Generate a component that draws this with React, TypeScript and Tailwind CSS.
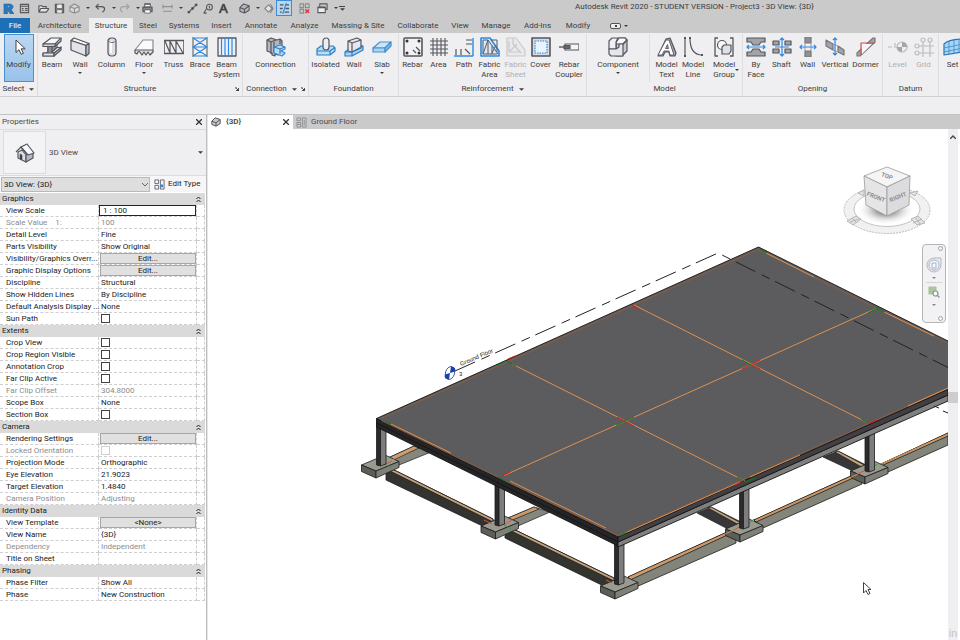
import { useState } from "react";
import type { ReactNode } from "react";
import clsx from "clsx";

const DARK = "#55565c";
const BLUE = "#2f8ae0";

const Icon: React.FC<{ children: ReactNode; className?: string; box?: number }> = ({ children, className = "size-5", box = 20 }) => (
  <svg viewBox={`0 0 ${box} ${box}`} className={clsx("shrink-0", className)} fill="none" stroke={DARK} strokeWidth="1.2" strokeLinejoin="round" aria-hidden="true">
    {children}
  </svg>
);

const Caret: React.FC<{ className?: string }> = ({ className = "w-[5px] h-[3px]" }) => (
  <svg viewBox="0 0 6 3" className={clsx("shrink-0", className)} aria-hidden="true">
    <path d="M0 0h6L3 3z" fill="#3c3c3c" />
  </svg>
);

const icons: Record<string, ReactNode> = {
  modify: <path d="M7 3v12.500l3-2.800 2.200 4.600 2.200-1-2.200-4.500h4z" fill="#fff" stroke="#444" strokeWidth="1" />,
  beam: (
    <>
      <path d="M5 9.500 12 9l4-4v8l-5 3H5z" fill="#8e9097" stroke="none" />
      <path d="M1 7 9 1h10l-6 6z" fill="#f4f5f9" />
      <path d="M1 7h12v2.500H1z" fill="#d4d6de" />
      <path d="m13 9.500 6-5.500V1" fill="#b5b7c0" />
      <path d="M1 16h3l2-1V9.500M10 9.500V15l2 1v3H1v-3" />
      <path d="M1 16h11v3H1z" fill="#dfe1e8" />
      <path d="m12 16 7-6v3l-7 6z" fill="#b5b7c0" />
      <path d="m10 15 5-4.500h4L12 16z" fill="#f4f5f9" />
    </>
  ),
  wall: (
    <>
      <path d="M1 3.500 4 1l15 5.500-3 2z" fill="#fafafa" />
      <path d="M1 3.500 16 8.500V19L1 13z" fill="#e3e4ea" />
      <path d="m16 8.500 3-2v10L16 19z" fill="#b9bbc4" />
    </>
  ),
  column: (
    <>
      <rect x="6" y="1" width="8" height="18" rx="3.500" fill="#dcdee6" />
      <path d="M9 4v12" stroke="#fff" strokeWidth="2" />
      <path d="M6.500 4c1.500 2 5.500 2 7 0" strokeWidth=".8" />
    </>
  ),
  floor: (
    <>
      <path d="M1 13 9 3h10v10" fill="#fafafa" stroke="#8b8c92" />
      <path d="M1 13v3l2 1 1-2 1.500-.5L8 18l2-3 2 3 2-3 2 3 3-3v-2z" fill="#dfe0e6" />
    </>
  ),
  truss: (
    <>
      <path d="M0 3.500h20v13H0z" strokeWidth="1.500" />
      <path d="m1 4 5 12V4l6 12V4l7 12" strokeWidth="1.200" />
    </>
  ),
  brace: (
    <>
      <path d="M3 0v20M17 0v20" stroke="#888" strokeWidth="1.500" />
      <path d="M3 1h14M3 10h14M3 19h14M3 1l14 9L3 19M17 1 3 10l14 9" stroke={BLUE} strokeWidth="1.200" />
    </>
  ),
  beamSystem: (
    <>
      <path d="M1 1h18v18H1z" fill="#eef1f7" strokeWidth="1.300" />
      <path d="M4.500 1v18M8 1v18M11.500 1v18M15 1v18" stroke={BLUE} />
    </>
  ),
  connection: (
    <>
      <path d="M1 3 5 1l6 2 3-1 2 2v12l-4 2-3-1v2l-3-1v-2l-5-2z" fill="#b4b6be" />
      <path d="m1 3 4 2v12M5 5l5-2M8 5v11M14 2v5" />
      <path d="m8 10 6-2 5 2v2l-4 2 4 2-3 3-8-3z" fill="#b9dcf8" stroke={BLUE} />
      <path d="m8 10 6 2 5-2M14 12v5" stroke="#3a78b0" />
    </>
  ),
  isolated: (
    <>
      <path d="m1 12 4-3h12l2 2v3l-5 4H1z" fill="#b7dcf6" stroke="#2c7fc4" />
      <path d="M1 14h13l5-3.500M14 14v4" stroke="#2c7fc4" />
      <rect x="7" y="1" width="6" height="12" rx="3" fill="#eceef3" />
    </>
  ),
  wallFoundation: (
    <>
      <path d="m1 15 4-3 9-4 5 1v4L8 19H1z" fill="#a6d3f5" stroke="#2c7fc4" />
      <path d="M4 4 13 1l4 2v8l-9 4-4-1z" fill="#e6e8ee" />
      <path d="m8 6 9-3M8 6v9M4 4l4 2" />
      <path d="M1 15h7l11-6M8 15v4" stroke="#2c7fc4" />
    </>
  ),
  slab: (
    <>
      <path d="M1 11 8 5h11l-6 6z" fill="#cbe6fa" stroke="#4a8fc9" />
      <path d="M1 11h12v4H1z" fill="#a9d5f5" stroke="#4a8fc9" />
      <path d="m13 11 6-6v4l-6 6z" fill="#7fbbe8" stroke="#4a8fc9" />
    </>
  ),
  rebar: (
    <>
      <rect x="1" y="1" width="18" height="18" rx="1" fill="#f2f2f5" strokeWidth="1.600" />
      <g fill="#333" stroke="none">
        <circle cx="4" cy="4" r="1.500" /><circle cx="16" cy="4" r="1.500" /><circle cx="4" cy="16" r="1.500" /><circle cx="16" cy="16" r="1.500" />
      </g>
      <path d="m10 13 3 3M13 10l4 4" />
    </>
  ),
  area: <path d="M4 1v18M8 1v18M12 1v18M16 1v18M1 4h18M1 8h18M1 12h18M1 16h18" strokeWidth="1.100" />,
  path: (
    <>
      <path d="M0 19h19M19 1v18" stroke={BLUE} strokeWidth="1.400" />
      <path d="M2 12v6M7 12v6M11 12l5 5M12 3h6M12 7h6" />
    </>
  ),
  fabricArea: (
    <>
      <path d="M1 1h9l9 13v5H1z" fill="#dce7f5" stroke={BLUE} strokeWidth="1.600" />
      <path d="M3 17V3h5l10 14M3 17 8 3v14M12 9v8M17 3v12M11 3h6M3 17h14M12 16l4-8" stroke="#555a66" strokeWidth="1" />
    </>
  ),
  fabricSheet: (
    <g stroke="#c9c9cc">
      <path d="M1 1h9l9 12v6H1z" fill="#e9e9eb" />
      <path d="m3 15 8-8M3 4v11h10M7 1v6l8 9" />
    </g>
  ),
  cover: (
    <>
      <path d="M1 1h18v18H1z" fill="#d8dbe5" strokeWidth="1.600" />
      <path d="M4 4h12v12H4z" fill="#eaf4fd" stroke={BLUE} strokeDasharray="1.500 1" />
    </>
  ),
  coupler: (
    <>
      <path d="M6 7h14v6H6z" fill="#f5f5f7" />
      <path d="M5 8.500h6v3H5z" fill="#8a8b90" />
      <path d="M0 10h11" strokeWidth="1.400" />
    </>
  ),
  component: (
    <>
      <path d="M8 6V3l3-2h6l2 2v11l-5 5H8z" fill="#c9cbd4" />
      <path d="M8 5.500 11 1h6l2 2-4 4H8z" fill="#fafafb" />
      <path d="M1 12V4l3-3h6L8 5v7z" fill="#eff0f4" />
      <path d="M1 12h7l3-2V7h4v12H3l-2-2z" fill="#e6e7ed" />
      <path d="m15 7 4-4" />
    </>
  ),
  modelText: (
    <>
      <path d="m1 19 8-17 4-1 6 15-1 3h-5l-1-4H8l-2 4z" fill="#a5a8b3" />
      <path fillRule="evenodd" d="M1 18 9 3h3l5 15h-4l-1-4H7l-2 4zM8.500 11.500h3l-1-4z" fill="#fff" strokeWidth=".9" />
    </>
  ),
  modelLine: (
    <>
      <path d="M2 1v18" />
      <path d="M7 1c0 11 4 17 12 17" strokeWidth="1.200" />
      <path d="M1 1h2M1 19h2M6 1h2M18 18h2" strokeWidth="2" />
    </>
  ),
  modelGroup: (
    <>
      <path d="M4 1H1v18h3M16 1h3v18h-3" strokeWidth="1.300" />
      <circle cx="8" cy="8" r="4.500" fill="#fafafa" />
      <path d="m8 10 2-2h7v6l-2 3H8z" fill="#dfe1e8" />
    </>
  ),
  byFace: (
    <>
      <path d="M1 1h18v4h-4l-2 3H7L5 5H1zM1 19h18v-4h-4l-2-3H7l-2 3H1z" fill="#a3a4aa" />
      <path d="M1 10h18M3 8l-2 2 2 2M17 8l2 2-2 2" stroke={BLUE} />
    </>
  ),
  shaft: (
    <>
      <path d="M1 4h6v4H1zM13 4h6v4h-6zM1 12h6v4H1zM13 12h6v4h-6z" fill="#a3a4aa" />
      <path d="M10 1v18M8 3l2-2 2 2M8 17l2 2 2-2M3 10h14" stroke={BLUE} />
    </>
  ),
  wallOpening: (
    <>
      <path d="M7 0h6v6H7zM7 14h6v6H7z" fill="#8f9097" stroke="#777" />
      <path d="M7 6v8M13 6v8" stroke="#aaa" />
      <path d="M2 10h16M4 8l-2 2 2 2M16 8l2 2-2 2" stroke={BLUE} />
    </>
  ),
  vertical: (
    <>
      <path d="m1 3 7 4v6L1 9zM13 9l6 4v5l-6-3z" fill="#a3a4aa" stroke="#777" />
      <path d="m8 7 5 2M8 13l5 2" stroke="#aaa" />
      <path d="M10 1v17M8 3l2-2 2 2M8 16l2 2 2-2" stroke={BLUE} />
    </>
  ),
  dormer: (
    <>
      <path d="M1 16 17 1h2v4L4 19H1z" fill="#a3a4aa" stroke="#77787d" />
      <path d="M5 7h11L6 17z" fill="#f6f6f8" stroke="none" />
      <path d="M5 18V6h14" stroke="#c85050" strokeWidth="1.200" />
    </>
  ),
  level: (
    <g stroke="#bcbcc0">
      <path d="M0 10h4M7 6v5M20 10H8" />
      <circle cx="14" cy="10" r="5" fill="#eee" />
      <path d="M14 10V5a5 5 0 0 1 5 5zM14 10v5a5 5 0 0 1-5-5z" fill="#a5a5a9" stroke="none" />
    </g>
  ),
  grid: (
    <g stroke="#bcbcc0">
      <path d="M9 5v15M16 5v15M5 9h15M5 16h15" strokeWidth="1.200" />
      <circle cx="9" cy="3" r="2" /><circle cx="16" cy="3" r="2" /><circle cx="3" cy="9" r="2" /><circle cx="3" cy="16" r="2" />
    </g>
  ),
  set: (
    <>
      <path d="M1 7c3-3 9-5 19-5v13L1 18z" fill="#a6d6f7" stroke="#2875b5" />
      <path d="M1 11l19-4M1 15l19-4M6 4v13M11 3v13M16 2v13" stroke="#4a90c8" strokeWidth=".9" />
    </>
  ),
};

type Tool = { name: string; icon: string; width: string; menu?: boolean; disabled?: boolean; active?: boolean; divider?: boolean };

const ToolButton: React.FC<{ tool: Tool }> = ({ tool }) => (
  <button
    disabled={tool.disabled}
    className={clsx(
      "relative flex h-[48px] shrink-0 flex-col items-center border pt-[2px]",
      tool.width,
      tool.active ? "border-[#4a90cf] bg-linear-to-b from-[#bcd7f0] to-[#98c2ea]" : "border-transparent"
    )}
  >
    <Icon>{icons[tool.icon]}</Icon>
    <span className={clsx("mt-[3px] text-center text-[8px] leading-[10px] whitespace-pre", tool.disabled ? "text-[#b0b0b3]" : "text-[#3d3d40]")}>
      {tool.name}
    </span>
    {tool.menu ? <Caret className={tool.name.includes("\n") ? "absolute right-[2px] bottom-[10px] h-[2px] w-[4px]" : "mt-[2px] h-[2px] w-[4px]"} /> : null}
  </button>
);

const RibbonPanel: React.FC<{ title: string; width: string; tools: Tool[]; menu?: boolean; launcher?: boolean; center?: boolean }> = ({
  title, width, tools, menu, launcher, center,
}) => (
  <section className={clsx("flex shrink-0 flex-col border-r border-[#dddde0]", width)}>
    <div className={clsx("flex", center && "justify-center")}>
      {tools.map((tool) => (
        <div key={tool.name} className="flex">
          <ToolButton tool={tool} />
          {tool.divider ? <span className="mr-[3px] w-px bg-[#dddde0]" /> : null}
        </div>
      ))}
    </div>
    <div className={clsx("relative flex h-[14px] items-center justify-center gap-[5px] text-[8px] text-[#3d3d40]", menu && launcher && "pr-[8px]")}>
      <span>{title}</span>
      {menu ? <Caret /> : null}
      {launcher ? (
        <svg viewBox="0 0 4 4" className="absolute right-[3px] size-1" aria-hidden="true">
          <path d="M0 0h2M0 0v2M1 1l2 2M4 1v3H1z" stroke="#444" strokeWidth=".8" fill="#444" />
        </svg>
      ) : null}
    </div>
  </section>
);

const panels = [
  {
    title: "Select", width: "w-[38px]", menu: true, center: true,
    tools: [{ name: "Modify", icon: "modify", width: "w-[30px]", active: true }],
  },
  {
    title: "Structure", width: "w-[205px]", launcher: true,
    tools: [
      { name: "Beam", icon: "beam", width: "w-[28px]" },
      { name: "Wall", icon: "wall", width: "w-[28px]", menu: true },
      { name: "Column", icon: "column", width: "w-[35px]" },
      { name: "Floor", icon: "floor", width: "w-[30px]", menu: true },
      { name: "Truss", icon: "truss", width: "w-[29px]" },
      { name: "Brace", icon: "brace", width: "w-[24px]" },
      { name: "Beam\nSystem", icon: "beamSystem", width: "w-[29px]" },
    ],
  },
  {
    title: "Connection", width: "w-[66px]", menu: true, launcher: true, center: true,
    tools: [{ name: "Connection", icon: "connection", width: "w-[46px]" }],
  },
  {
    title: "Foundation", width: "w-[90px]", center: true,
    tools: [
      { name: "Isolated", icon: "isolated", width: "w-[29px]" },
      { name: "Wall", icon: "wallFoundation", width: "w-[28px]" },
      { name: "Slab", icon: "slab", width: "w-[28px]", menu: true },
    ],
  },
  {
    title: "Reinforcement", width: "w-[188px]", menu: true, center: true,
    tools: [
      { name: "Rebar", icon: "rebar", width: "w-[26px]" },
      { name: "Area", icon: "area", width: "w-[26px]" },
      { name: "Path", icon: "path", width: "w-[25px]" },
      { name: "Fabric\nArea", icon: "fabricArea", width: "w-[26px]" },
      { name: "Fabric\nSheet", icon: "fabricSheet", width: "w-[26px]", disabled: true },
      { name: "Cover", icon: "cover", width: "w-[24px]" },
      { name: "Rebar\nCoupler", icon: "coupler", width: "w-[33px]" },
    ],
  },
  {
    title: "Model", width: "w-[156px]",
    tools: [
      { name: "Component", icon: "component", width: "w-[62px]", menu: true, divider: true },
      { name: "Model\nText", icon: "modelText", width: "w-[27px]" },
      { name: "Model\nLine", icon: "modelLine", width: "w-[26px]" },
      { name: "Model\nGroup", icon: "modelGroup", width: "w-[36px]", menu: true },
    ],
  },
  {
    title: "Opening", width: "w-[140px]", center: true,
    tools: [
      { name: "By\nFace", icon: "byFace", width: "w-[24px]" },
      { name: "Shaft", icon: "shaft", width: "w-[27px]" },
      { name: "Wall", icon: "wallOpening", width: "w-[25px]" },
      { name: "Vertical", icon: "vertical", width: "w-[30px]" },
      { name: "Dormer", icon: "dormer", width: "w-[31px]" },
    ],
  },
  {
    title: "Datum", width: "w-[56px]", center: true,
    tools: [
      { name: "Level", icon: "level", width: "w-[26px]", disabled: true },
      { name: "Grid", icon: "grid", width: "w-[26px]", disabled: true },
    ],
  },
  { title: "", width: "w-[90px]", tools: [{ name: "Set", icon: "set", width: "w-[27px]" }] },
];

const tabs = [
  ["Architecture", "w-[59px]"],
  ["Structure", "w-[44px]"],
  ["Steel", "w-[30px]"],
  ["Systems", "w-[42px]"],
  ["Insert", "w-[33px]"],
  ["Annotate", "w-[46px]"],
  ["Analyze", "w-[41px]"],
  ["Massing & Site", "w-[66px]"],
  ["Collaborate", "w-[54px]"],
  ["View", "w-[30px]"],
  ["Manage", "w-[42px]"],
  ["Add-Ins", "w-[41px]"],
  ["Modify", "w-[40px]"],
];

const quickTools: { name: string; width: string; menu?: boolean; active?: boolean; separated?: boolean; art: ReactNode }[] = [
  { name: "Revit", width: "w-[16px]", art: <path fillRule="evenodd" d="M1 12V1h6c5 0 5 5 2 6l3 5H8L5 8v4zM5 3v2h2V3z" fill="#2a79bf" stroke="#1b5c9b" strokeWidth=".5" /> },
  { name: "Home", width: "w-[16px]", art: <path d="M1.500 1.500h9v9h-9zM1.500 3.500h9M3 6h2M3 8h2M6.500 6h3M6.500 8h3" /> },
  { name: "Open", width: "w-[22px]", art: <path d="M1 10V3h3l1 1h4v2M1 10l2-4h9l-3 4z" fill="#e4e4e6" /> },
  { name: "Save", width: "w-[11px]", art: <><path d="M1.500 1.500h9v9h-9z" fill="#777" /><path d="M3.500 1.500h5v4h-5zM3.500 8h5v2.500h-5z" fill="#eee" stroke="none" /></> },
  { name: "Synchronize", width: "w-[28px]", menu: true, art: <g stroke="#8c8c8f"><path d="m1 4 5-3 5 3v5l-5 2-5-2z" fill="#d7d7d9" /><path d="m1 4 5 2 5-2M6 6v5" /></g> },
  { name: "Undo", width: "w-[24px]", menu: true, art: <path d="M4 1 1 4l3 3M1 4h6c5 0 4 5 1 6" strokeWidth="1.300" /> },
  { name: "Redo", width: "w-[24px]", menu: true, art: <path d="m8 1 3 3-3 3M11 4H5C0 4 1 9 4 10" stroke="#a0a0a2" strokeWidth="1.300" /> },
  { name: "Print", width: "w-[12px]", art: <><path d="M3 5V1h6v4M1 4.500h10v5H1z" fill="#888" /><path d="M3 1.500h6V4H3zM3 7.500h6V11H3z" fill="#fff" strokeWidth=".8" /></> },
  { name: "Measure", width: "w-[24px]", menu: true, separated: true, art: <path d="M1 4h10M1 2v4M11 2v4M1 9h10" stroke="#8f8f92" strokeWidth="1.200" /> },
  { name: "Aligned dimension", width: "w-[16px]", art: <><path d="m2 10 8-8" /><path d="M1 9h2v2H1zM9 1h2v2H9zM5 5h2v2H5z" fill="#444" strokeWidth=".6" /></> },
  { name: "Tag", width: "w-[16px]", art: <><circle cx="7" cy="4.500" r="3.200" /><path d="M7 3v3M4 6l-3 5h3" /></> },
  { name: "Text", width: "w-[14px]", art: <path fillRule="evenodd" d="M1 11 5 1h2l4 10H9L8 8H4l-1 3zM5 6.500h2L6 3z" fill="#444" strokeWidth=".4" /> },
  { name: "Default 3D view", width: "w-[24px]", menu: true, separated: true, art: <><path d="m1 5 4-4 6 2v5l-5 3-5-2z" fill="#b9b9bd" /><path d="m1 5 5 2 5-4M6 7v4" /></> },
  { name: "Section", width: "w-[15px]", art: <path d="M6 2 2 6l4 4 4-4zM8 1l3 5-3 5" stroke="#87878a" fill="#e6e6e8" /> },
  { name: "Thin lines", width: "w-[16px]", active: true, art: <><path d="M1 2h4M1 6h3M1 10h2M7 2h4M7 6h4M6 10h5" strokeWidth="1.400" /><path d="M8 0 4 12" stroke={BLUE} /></> },
  { name: "Close hidden", width: "w-[24px]", art: <><path d="M1 1h4v4H1zM7 1h4v4H7zM1 7h4v4H1z" stroke="#8b8b8e" /><path d="m7 7 4 4M11 7l-4 4" stroke="#d33" strokeWidth="1.600" /></> },
  { name: "Switch windows", width: "w-[22px]", menu: true, art: <><path d="M3 4V1h8v6H9" /><path d="M1 4.500h8v6H1z" fill="#eee" /><path d="M1 5h8" strokeWidth="1.500" /></> },
];

type Row = { label: string; value?: string; kind?: "edit" | "check" | "input"; dim?: boolean };

const groups: { title: string; rows: Row[] }[] = [
  {
    title: "Graphics",
    rows: [
      { label: "View Scale", value: "1 : 100", kind: "input" },
      { label: "Scale Value    1:", value: "100", dim: true },
      { label: "Detail Level", value: "Fine" },
      { label: "Parts Visibility", value: "Show Original" },
      { label: "Visibility/Graphics Overr...", value: "Edit...", kind: "edit" },
      { label: "Graphic Display Options", value: "Edit...", kind: "edit" },
      { label: "Discipline", value: "Structural" },
      { label: "Show Hidden Lines", value: "By Discipline" },
      { label: "Default Analysis Display ...", value: "None" },
      { label: "Sun Path", kind: "check" },
    ],
  },
  {
    title: "Extents",
    rows: [
      { label: "Crop View", kind: "check" },
      { label: "Crop Region Visible", kind: "check" },
      { label: "Annotation Crop", kind: "check" },
      { label: "Far Clip Active", kind: "check" },
      { label: "Far Clip Offset", value: "304.8000", dim: true },
      { label: "Scope Box", value: "None" },
      { label: "Section Box", kind: "check" },
    ],
  },
  {
    title: "Camera",
    rows: [
      { label: "Rendering Settings", value: "Edit...", kind: "edit" },
      { label: "Locked Orientation", kind: "check", dim: true },
      { label: "Projection Mode", value: "Orthographic" },
      { label: "Eye Elevation", value: "21.9023" },
      { label: "Target Elevation", value: "1.4840" },
      { label: "Camera Position", value: "Adjusting", dim: true },
    ],
  },
  {
    title: "Identity Data",
    rows: [
      { label: "View Template", value: "<None>", kind: "edit" },
      { label: "View Name", value: "{3D}" },
      { label: "Dependency", value: "Independent", dim: true },
      { label: "Title on Sheet", value: "" },
    ],
  },
  {
    title: "Phasing",
    rows: [
      { label: "Phase Filter", value: "Show All" },
      { label: "Phase", value: "New Construction" },
    ],
  },
];

const PropertyValue: React.FC<{ row: Row; id: string }> = ({ row, id }) => {
  const [checked, setChecked] = useState(false);
  const [text, setText] = useState(row.value ?? "");

  if (row.kind === "check") {
    return (
      <input
        id={id}
        type="checkbox"
        checked={checked}
        disabled={row.dim}
        onChange={(e) => setChecked(e.target.checked)}
        className={clsx("ml-[2px] size-[9px] appearance-none border bg-white checked:bg-[#333]", row.dim ? "border-[#cfcfcf]" : "border-[#444]")}
      />
    );
  }
  if (row.kind === "input") {
    return (
      <input
        id={id}
        value={text}
        onChange={(e) => setText(e.target.value)}
        className="h-[11px] w-full border border-[#222] bg-white px-[3px] text-[8px] leading-[9px] outline-none"
      />
    );
  }
  if (row.kind === "edit") {
    return (
      <button id={id} className="ml-px h-[11px] w-[96px] border border-[#a6a6a6] bg-[#e0e0e1] text-center text-[8px] leading-[9px]">
        {row.value}
      </button>
    );
  }
  return <output id={id} className="pl-[2px]">{row.value}</output>;
};

const PropertyGroup: React.FC<{ title: string; rows: Row[] }> = ({ title, rows }) => (
  <tbody>
    <tr className="h-3 bg-[#dadadb]">
      <th colSpan={3} scope="rowgroup" className="p-0 text-left font-normal">
        <button className="flex h-3 w-full items-center justify-between pr-[4px] pl-[2px] text-[8px] leading-3 text-[#222]">
          {title}
          <svg viewBox="0 0 5 6" className="h-[6px] w-[5px]" fill="none" stroke="#222" aria-hidden="true">
            <path d="m.5 3 2-2 2 2M.5 6l2-2 2 2" />
          </svg>
        </button>
      </th>
    </tr>
    {rows.map((row) => {
      const id = row.label.toLowerCase().replace(/[^a-z]+/g, "-");
      return (
        <tr key={row.label} className={clsx("h-3", row.dim ? "text-[#8c8c8e]" : "text-[#222]")}>
          <th scope="row" className="border-r border-b border-dashed border-[#cfcfd1] p-0 pl-[6px] text-left font-normal">
            <label htmlFor={id} className="block h-[11px] leading-[11px] whitespace-pre">{row.label}</label>
          </th>
          <td className="border-r border-b border-dashed border-[#cfcfd1] p-0">
            <div className="flex h-[11px] items-center leading-[11px]"><PropertyValue row={row} id={id} /></div>
          </td>
          <td className="border-r border-b border-dashed border-[#cfcfd1] p-0" />
        </tr>
      );
    })}
  </tbody>
);

const PropertiesPanel = () => (
  <aside className="flex w-[207px] shrink-0 flex-col border-r border-[#bdbdc0] bg-white text-[8px]">
    <div className="flex h-[14px] items-center justify-between bg-[#efeef0] pr-[4px] pl-[2px]">
      <h2 className="text-[#4a4a4d]">Properties</h2>
      <button aria-label="Close properties">
        <svg viewBox="0 0 6 6" className="size-[6px]" stroke="#333" strokeWidth="1.300"><path d="m0 0 6 6M6 0 0 6" /></svg>
      </button>
    </div>
    <button className="flex h-[47px] items-center border-y border-[#dcdcde] bg-[#efeef0] px-[3px] text-[#4a4a4d]">
      <span className="mr-[3px] flex h-[43px] w-[43px] items-center justify-center border border-[#dcdcde] bg-[#f3f2f4]">
        <Icon>
          <path d="M3 9v6l8 4V12L7 7z" fill="#dcdee5" />
          <path d="m11 12 3-6 4 4v5l-7 4z" fill="#b4b7c3" />
          <path d="m1 9 5-5 5 8 3 0-5-8z" fill="#eceef4" stroke="none" />
          <path d="m6 4 6-3 7 9-6 2z" fill="#f7f8fb" />
          <path d="m1 9 5-5 6 8" />
          <path d="M5 11v5l2 1v-5z" fill="#333" strokeWidth=".6" />
        </Icon>
      </span>
      3D View
      <Caret className="ml-auto h-[3px] w-[5px]" />
    </button>
    <div className="flex h-[16px] items-center gap-[4px] bg-[#f6f5f7] pl-px">
      <div className="relative w-[149px]">
        <select aria-label="View" className="block h-[15px] w-full appearance-none border border-[#b9b9bb] bg-[#dededf] pl-[2px] text-[8px] leading-[13px] text-[#222]">
          <option>{"3D View: {3D}"}</option>
        </select>
        <svg viewBox="0 0 6 4" className="pointer-events-none absolute top-[6px] right-[2px] h-1 w-[6px]" fill="none" stroke="#666"><path d="m0 0 3 3 3-3" /></svg>
      </div>
      <button className="flex items-center gap-[3px] text-[#222]">
        <Icon className="size-[11px]" box={12}>
          <path d="M1 1h4v4H1zM1 7h4v4H1zM7 1h4v10H7z" strokeWidth=".9" />
          <path d="M7 6h3v3H7z" fill={BLUE} stroke="none" />
        </Icon>
        Edit Type
      </button>
    </div>
    <table className="mt-px w-[205px] table-fixed border-separate border-spacing-0">
      <colgroup>
        <col className="w-[99px]" />
        <col className="w-[98px]" />
        <col />
      </colgroup>
      {groups.map((group) => <PropertyGroup key={group.title} {...group} />)}
    </table>
  </aside>
);

const Column: React.FC<{ x: number; top: number; bottom: number }> = ({ x, top, bottom }) => (
  <g stroke="#1c1c1c" strokeWidth=".8">
    <path d={`M${x} ${top}h4v${bottom - top}l-4-1z`} fill="#2b2b2d" />
    <path d={`M${x + 4} ${top}h5.500v${bottom - top - 2}l-5.500 2z`} fill="#7d7d7c" />
  </g>
);

// x, y is the front corner of the footing's top face
const Footing: React.FC<{ x: number; y: number }> = ({ x, y }) => (
  <g transform={`translate(${x} ${y})`} stroke="#1c1c1c" strokeWidth=".8">
    <path d="M-14.500-6 9-16 23-9.500 0 0z" fill="#9a9b90" />
    <path d="M-14.500-6 0 0v7L-14.500.5z" fill="#5d5e57" />
    <path d="M0 0 23-9.500v6L0 7z" fill="#7f8077" />
  </g>
);

const Model = () => (
  <svg viewBox="208 129 740 511" preserveAspectRatio="xMinYMin slice" className="absolute inset-0 size-full" aria-label="3D model">
    {/* ground beams behind the deck */}
    <g stroke="#1c1c1c" strokeWidth=".7">
      <path d="M388 458 414 446l17 6-32 13z" fill="#85867d" />
      <path d="M388 458 414 446l5 2-28 13z" fill="#c3a27c" />
      <path d="M508 518 534 507l16 5-32 14z" fill="#85867d" />
      <path d="M508 518 534 507l5 2-29 12z" fill="#c3a27c" />
      <path d="m697 513 14-6 30 15-13 7z" fill="#37373a" />
      <path d="m823 457 15-6 30 15-13 6z" fill="#37373a" />
      <path d="m708 508 3-1 30 16-2 2zM835 452l3-1 30 16-3 2z" fill="#c3a27c" />
    </g>
    {/* left run */}
    <g stroke="#1c1c1c" strokeWidth=".8">
      <path d="M386 466 493 519v12L386 480zM505 525l109 53v13L505 538z" fill="#33332f" />
      <path d="M386 466 493 519v3L386 469zM505 525l109 53v3L505 528z" fill="#c3a27c" />
    </g>
    {/* right run */}
    <g stroke="#1c1c1c" strokeWidth=".8">
      <path d="M628 577 736 528v15L636 587zM754 520l108-49v13l-99 44zM879 465l69-32v12l-60 27z" fill="#83847a" />
      <path d="M628 577 736 528v3L630 580zM754 520l108-49v3l-106 48zM879 465l69-32v3l-67 30z" fill="#c3a27c" />
    </g>
    <Footing x={376} y={471} />
    <Footing x={495.500} y={532} />
    <Footing x={615} y={592} />
    <Footing x={740} y={535} />
    <Footing x={865} y={477} />
    <g strokeWidth="1" fill="none">
      <path d="m384 465 8-4M492 524l-8-4M504 525l8-5M612 583l-6-3M732 531l9-5M857 474l9-4" stroke="#e0533c" />
      <path d="m386 465 6 3M504 525l7 4M748 524l6-5M873 467l6-4" stroke="#3f9a55" />
      <path d="m392 460 24-12M512 519l24-11M630 577l104-47M756 520l102-46M881 464l67-30" stroke="#dc8d50" />
    </g>
    <Column x={376.500} top={424} bottom={466} />
    <Column x={495} top={482} bottom={526} />
    <Column x={614.500} top={541} bottom={585} />
    <Column x={739.500} top={485} bottom={529} />
    <Column x={865} top={428} bottom={472} />
    {/* deck */}
    <g stroke="#151515" strokeWidth=".9" strokeLinejoin="round">
      <path d="M376.500 418.500 618 537v9l-241.500-119z" fill="#252528" />
      <path d="M618 542 948 395v6L618 547z" fill="#80807e" />
      <path d="M618 537 948 389v6L618 542z" fill="#413f44" />
      <path d="m376.500 423 241.500 119" />
      <path d="M376.500 418.500 758.500 247 950 342v46.500L618 537z" fill="#5c5b5d" />
    </g>
    <g fill="none" stroke="#96603c" strokeWidth=".8">
      <path d="M381 418.500 758 249.500 947 343M381 420.500 618 535.500 948 388" />
    </g>
    <g fill="none" stroke="#dd9150" strokeWidth="1">
      <path d="M512 364 745 481M634 305 868 423M504 475.500 876 308.500" />
      <path d="m391 424 60 29M766 253l48 24M884 312l50 24M510 481l96 47M625 533l115-51M908 406l40-18M750 477l50-22" />
    </g>
    <g strokeWidth="1" stroke="#e01818" fill="none">
      <path d="m617 417 17 9M742 369l18-9M752 365l8 4M632 305l8 5M502 476l8-4M508 359l7-3M735 485l8-4M868 424l9-4" />
    </g>
    <g strokeWidth="1" stroke="#0b7a1a" fill="none">
      <path d="m616 425 18-8M742 360l9 5M507 361l9 5M868 313l9-5 8 4M760 249l7 4M498 477l9 5M737 477l9 5 9-4M861 419l7 4M620 536l8-4M386 421l5 3M498 365l6-3" />
    </g>
    {/* level line and its head */}
    <path d="M455 371 718 253 948 367.500" fill="none" stroke="#222" strokeWidth="1" strokeDasharray="22 7 9 6" />
    <path d="m934 406 5 2M943 411l5 2" stroke="#222" />
    <g stroke="#1740a8">
      <ellipse cx="450" cy="373" rx="4.500" ry="6.500" fill="#fff" strokeWidth=".8" transform="rotate(15 450 373)" />
      <path d="m450 373 1-6.500c4 0 5 3 4 5zM450 373l-1 6.500c-4 0-5-3-4-5z" fill="#1740a8" stroke="none" />
    </g>
    <text x="461" y="366" transform="rotate(-23 461 366)" fontSize="6" fill="#222" className="font-['Liberation_Sans']">Ground Floor</text>
    <text x="459" y="376" fontSize="6" fill="#222" className="font-['Liberation_Sans']">3</text>
    <path d="M863.500 582.500v10.500l2.500-2.500 2 4 2-1-2-4h3z" fill="#fff" stroke="#444" />
  </svg>
);

const ViewCube = () => (
  <svg viewBox="0 0 92 74" className="absolute top-[34px] right-[15px] h-[74px] w-[92px]" aria-label="View cube">
    <defs>
      <radialGradient id="cube-shadow">
        <stop offset=".3" stopColor="#999" />
        <stop offset="1" stopColor="#fff" stopOpacity="0" />
      </radialGradient>
    </defs>
    <ellipse cx="46" cy="47" rx="43" ry="23.500" fill="#f1f1f2" stroke="#bbb" strokeDasharray="2 1" />
    <ellipse cx="46" cy="46" rx="33" ry="17.500" fill="#fff" stroke="#c4c4c4" />
    <ellipse cx="45" cy="47" rx="29" ry="15" fill="url(#cube-shadow)" />
    <g fill="#e2e2e3" stroke="#aaa" strokeWidth=".8">
      <path d="m6 58 9-5 5 3-8 6zM70 56l7-3 7 7-8 2zM17 30l6-3v6zM69 30l8-2-3 5z" />
      <path d="m9 59 9-3M11 55l5 5M72 60l9-4M75 55l4 6" />
    </g>
    <g stroke="#999" strokeWidth=".8" strokeLinejoin="round">
      <path d="m23 13 23-9 23 9-23 11z" fill="#f5f5f6" />
      <path d="m23 13 23 11v29L25 42z" fill="#e5e5e6" />
      <path d="m46 24 23-11-1 29-22 11z" fill="#dcdcde" />
    </g>
    <g fontSize="6" fontWeight="bold" fill="#8e8e92" textAnchor="middle" className="font-['Roboto']">
      <text x="35" y="36" transform="rotate(22 35 34)">FRONT</text>
      <text x="57" y="36" transform="rotate(-22 57 34)">RIGHT</text>
      <text x="46" y="15" transform="rotate(20 46 13)">TOP</text>
    </g>
  </svg>
);

const NavigationBar = () => (
  <div className="absolute top-[115px] right-[2px] flex h-[79px] w-6 flex-col items-center rounded-[4px] border border-[#b5b5b8] bg-[#f2f2f4] py-px">
    <button aria-label="Close navigation bar" className="mr-[2px] size-[5px] self-end rounded-full border border-[#a5a5a8]" />
    <button aria-label="Steering wheel" className="mt-[6px] flex flex-col items-center gap-[4px]">
      <Icon className="size-4" box={16}>
        <path d="M8 1h7v7a7 7 0 1 1-7-7z" fill="#e6e8ee" stroke="#b5b8c1" strokeWidth="1" />
        <circle cx="8" cy="8" r="5" fill="#f6f8fb" stroke="#aab6c8" strokeWidth="1" />
        <path d="M6 11V6h4v5z" stroke="#9aa9bf" strokeWidth=".9" />
      </Icon>
      <Caret className="h-[2px] w-[4px] opacity-60" />
    </button>
    <hr className="my-[3px] w-4 border-[#d5d5d7]" />
    <button aria-label="Zoom region" className="flex flex-col items-center gap-[6px]">
      <Icon className="size-3" box={12}>
        <path d="M1 1h7v7H1z" fill="#a9c79a" stroke="#a9c79a" />
        <circle cx="7.500" cy="7.500" r="2.500" fill="#fff" stroke="#8d9098" />
        <path d="m9.500 9.500 2 2" stroke="#8d9098" />
      </Icon>
      <Caret className="h-[2px] w-[4px] opacity-60" />
    </button>
    <button aria-label="Navigation bar options" className="mt-auto mr-[2px] size-[5px] self-end rounded-full border border-[#a5a5a8]" />
  </div>
);

export default function App() {
  const [activeTab, setActiveTab] = useState("Structure");

  return (
    <div className="flex h-screen flex-col overflow-hidden bg-[#efeef0] font-['Roboto','Open_Sans',sans-serif] text-[8px] text-[#3d3d40]">
      <header className="shrink-0 bg-[#cacacb]">
        <div className="flex h-[18px]">
          <div className="flex shrink-0 items-start">
            {quickTools.map((tool) => (
              <button
                key={tool.name}
                aria-label={tool.name}
                className={clsx(
                  "flex h-[16px] items-center justify-center gap-[6px]",
                  tool.width,
                  tool.separated && "ml-[7px]",
                  tool.active && "border border-[#3b8ddb] bg-[#b9d6f1]"
                )}
              >
                <Icon className="size-[11px]" box={12}>{tool.art}</Icon>
                {tool.menu ? <Caret className="h-[2px] w-[4px]" /> : null}
              </button>
            ))}
            <button aria-label="Customize toolbar" className="flex h-[16px] w-[8px] flex-col items-center justify-center gap-px">
              <span className="h-px w-[6px] bg-[#444]" />
              <Caret />
            </button>
          </div>
          <h1 className="flex-1 pl-[83px] text-center leading-[13px]">
            {"Autodesk Revit 2020 - STUDENT VERSION - Project3 - 3D View: {3D}"}
          </h1>
        </div>
        <nav className="flex h-[15px]">
          <button className="w-[30px] bg-[#1d70b5] text-white">File</button>
          {tabs.map(([name, width]) => (
            <button
              key={name}
              onClick={() => setActiveTab(name)}
              className={clsx("shrink-0 text-center whitespace-nowrap", width, activeTab === name && "bg-[#efeef0]")}
            >
              {name}
            </button>
          ))}
          <button aria-label="Minimize ribbon" className="ml-[12px] flex items-center gap-[3px]">
            <span className="flex h-[6px] w-[11px] items-center justify-center rounded-[2px] border border-[#555] bg-[#eee]">
              <span className="size-[2px] bg-[#444]" />
            </span>
            <Caret className="h-[2px] w-[4px]" />
          </button>
        </nav>
      </header>

      <div className="flex h-[64px] shrink-0 overflow-hidden border-b border-[#cfcfd2] pt-px">
        {panels.map((panel) => <RibbonPanel key={panel.title} {...panel} />)}
      </div>
      <div className="h-[18px] shrink-0 border-b border-[#c3c3c6]" />

      <div className="flex min-h-0 flex-1">
        <PropertiesPanel />
        <main className="flex min-w-0 flex-1 flex-col border-l border-[#e6e6e8] bg-white">
          <div className="flex h-[14px] shrink-0 bg-[#cacacb]">
            <div className="flex w-[85px] items-center bg-white pr-[4px] pl-[3px]">
              <Icon className="size-[10px]" box={12}>
                <path d="m1 5 4-4 6 2v5l-5 3-5-2z" fill="#c9c9cd" />
                <path d="m1 5 5 2 5-4M6 7v4" />
              </Icon>
              <button className="ml-[5px] font-semibold text-[#444]">{"{3D}"}</button>
              <button aria-label="Close tab" className="ml-auto">
                <svg viewBox="0 0 6 6" className="size-[6px]" stroke="#333" strokeWidth="1.300"><path d="m0 0 6 6M6 0 0 6" /></svg>
              </button>
            </div>
            <button className="flex items-center gap-[4px] pl-[3px] text-[#4a4a4d]">
              <Icon className="size-[11px]" box={12}>
                <path d="M1 1h4v3H1zM7 1h4v10H7zM1 6h4v5H1zM9 3v6M1 8h4" stroke="#8b8b8e" strokeWidth=".9" />
              </Icon>
              Ground Floor
            </button>
          </div>
          <div className="flex min-h-0 flex-1">
            <div className="relative flex-1 overflow-hidden">
              <Model />
              <ViewCube />
              <NavigationBar />
            </div>
            <div className="flex w-3 flex-col items-center border-r-2 border-white bg-[#efeef1]">
              <svg viewBox="0 0 6 4" className="mt-[6px] h-1 w-[6px] shrink-0" fill="none" stroke="#444" strokeWidth="1.400"><path d="m0 4 3-3 3 3" /></svg>
              <div className="mt-[253px] h-[11px] w-[10px] shrink-0 bg-[#cdcdcf]" />
              <span className="mt-auto text-[11px] leading-[12px] text-[#c4c4c6]">in</span>
            </div>
          </div>
        </main>
      </div>
    </div>
  );
}
